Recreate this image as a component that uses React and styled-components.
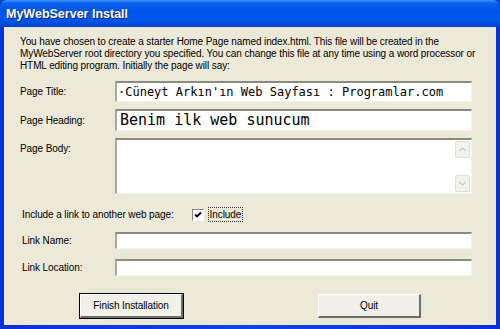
import React from "react";
import styled, { createGlobalStyle } from "styled-components";

const Global = createGlobalStyle`
  html, body { margin: 0; padding: 0; background: #0a3fd0; }
  body { font-family: "Liberation Sans", Arial, sans-serif; }
`;

const Window = styled.div`
  width: 500px;
  height: 329px;
  display: flex;
  flex-direction: column;
  background: linear-gradient(to right, #0831d9, #0a45e0 50%, #0831d9);
  border-radius: 7px 7px 0 0;
  overflow: hidden;
  box-sizing: border-box;
`;

const TitleBar = styled.div`
  height: 27px;
  flex: none;
  display: flex;
  align-items: center;
  padding-left: 6px;
  background: linear-gradient(
    to bottom,
    #3d95ff 0%,
    #0a5fef 12%,
    #0055e5 40%,
    #0058ee 70%,
    #0043cf 100%
  );
  color: #fff;
  font-family: "Liberation Sans", Arial, sans-serif;
  font-weight: bold;
  font-size: 12.5px;
  text-shadow: 1px 1px 0 #0a1e7a;
`;

const Body = styled.div`
  flex: 1;
  margin: 0 4px 4px;
  background: #ece9d8;
  padding: 9px 24px 0 16px;
  display: flex;
  flex-direction: column;
  font-size: 10px;
  letter-spacing: -0.1px;
  color: #000;
`;

const Intro = styled.p`
  margin: 0;
  line-height: 12px;
  white-space: nowrap;
  letter-spacing: -0.1px;
`;

const Fields = styled.div`
  display: grid;
  grid-template-columns: 95px 1fr;
  row-gap: ${(p) => p.$gap || 7}px;
  align-items: center;
  margin-top: ${(p) => p.$top || 0}px;
`;

const Label = styled.div`
  align-self: ${(p) => (p.$top ? "start" : "center")};
  padding-top: ${(p) => (p.$top ? 5 : 0)}px;
  padding-left: ${(p) => p.$indent || 0}px;
`;

const Input = styled.div`
  height: ${(p) => p.$h}px;
  box-sizing: border-box;
  background: #fff;
  border-top: 2px solid #8a8a80;
  border-left: 2px solid #a8a89c;
  border-right: 1px solid #f4f3ee;
  border-bottom: 1px solid #f4f3ee;
  font-family: "DejaVu Sans Mono", monospace;
  font-size: ${(p) => p.$fs || 12}px;
  letter-spacing: 0;
  line-height: ${(p) => p.$h - 3}px;
  padding-left: ${(p) => p.$pad || 1}px;
  white-space: nowrap;
  overflow: hidden;
`;

const TextArea = styled(Input)`
  display: flex;
  justify-content: flex-end;
  padding: 0;
`;

const ScrollBar = styled.div`
  width: 15px;
  display: flex;
  flex-direction: column;
  justify-content: space-between;
  padding: 1px 1px 1px 0;
`;

const Arrow = styled.div`
  height: 15px;
  background: #f3f3ee;
  border: 1px solid #e2e0d4;
  border-radius: 2px;
  display: flex;
  align-items: center;
  justify-content: center;
`;

const IncludeRow = styled.div`
  display: flex;
  align-items: center;
  margin-top: 13px;
  padding-left: 2px;
`;

const CheckLabel = styled.label`
  display: flex;
  align-items: center;
  gap: 4px;
  margin-left: 18px;
`;

const Box = styled.span`
  width: 12px;
  height: 12px;
  box-sizing: border-box;
  background: #fff;
  border-top: 1px solid #808080;
  border-left: 1px solid #808080;
  border-right: 1px solid #fff;
  border-bottom: 1px solid #fff;
  display: flex;
  align-items: center;
  justify-content: center;
`;

const Focus = styled.span`
  border: 1px dotted #333;
  padding: 0 1px;
  line-height: 13px;
`;

const Buttons = styled.div`
  display: flex;
  padding-left: 60px;
  gap: 135px;
  margin-top: 18px;
`;

const Button = styled.button`
  width: 103px;
  height: 24px;
  font-family: "Liberation Sans", Arial, sans-serif;
  font-size: 10px;
  letter-spacing: -0.1px;
  color: #000;
  background: #f0efe8;
  border-top: 1px solid #ffffff;
  border-left: 1px solid #ffffff;
  border-right: 2px solid #6f6f68;
  border-bottom: 2px solid #6f6f68;
  outline: 1px solid ${(p) => (p.$default ? "#000" : "transparent")};
  padding: 0;
`;

const ArrowIcon = ({ up }) => (
  <svg width="7" height="5" viewBox="0 0 7 5">
    <path
      d={up ? "M0.5 4 L3.5 1 L6.5 4" : "M0.5 1 L3.5 4 L6.5 1"}
      fill="none"
      stroke="#c3c8d6"
      strokeWidth="1.2"
    />
  </svg>
);

export default function App() {
  return (
    <>
      <Global />
      <Window>
        <TitleBar>MyWebServer Install</TitleBar>
        <Body>
          <Intro>
            You have chosen to create a starter Home Page named index.html. This file will be created in the
            <br />
            MyWebServer root directory you specified. You can change this file at any time using a word processor or
            <br />
            HTML editing program. Initially the page will say:
          </Intro>
          <Fields $top={9}>
            <Label>Page Title:</Label>
            <Input $h={21} $fs={12}>·Cüneyt Arkın'ın Web Sayfası : Programlar.com</Input>
            <Label>Page Heading:</Label>
            <Input $h={22} $fs={15} $pad={3}>Benim ilk web sunucum</Input>
            <Label $top>Page Body:</Label>
            <TextArea $h={56}>
              <ScrollBar>
                <Arrow><ArrowIcon up /></Arrow>
                <Arrow><ArrowIcon /></Arrow>
              </ScrollBar>
            </TextArea>
          </Fields>
          <IncludeRow>
            Include a link to another web page:
            <CheckLabel>
              <Box>
                <svg width="8" height="8" viewBox="0 0 8 8">
                  <path d="M1 3.5 L3 5.5 L7 1.5" fill="none" stroke="#000" strokeWidth="1.8" />
                </svg>
              </Box>
              <Focus>Include</Focus>
            </CheckLabel>
          </IncludeRow>
          <Fields $top={10} $gap={10}>
            <Label $indent={2}>Link Name:</Label>
            <Input $h={17} />
            <Label $indent={2}>Link Location:</Label>
            <Input $h={17} />
          </Fields>
          <Buttons>
            <Button $default>Finish Installation</Button>
            <Button>Quit</Button>
          </Buttons>
        </Body>
      </Window>
    </>
  );
}
